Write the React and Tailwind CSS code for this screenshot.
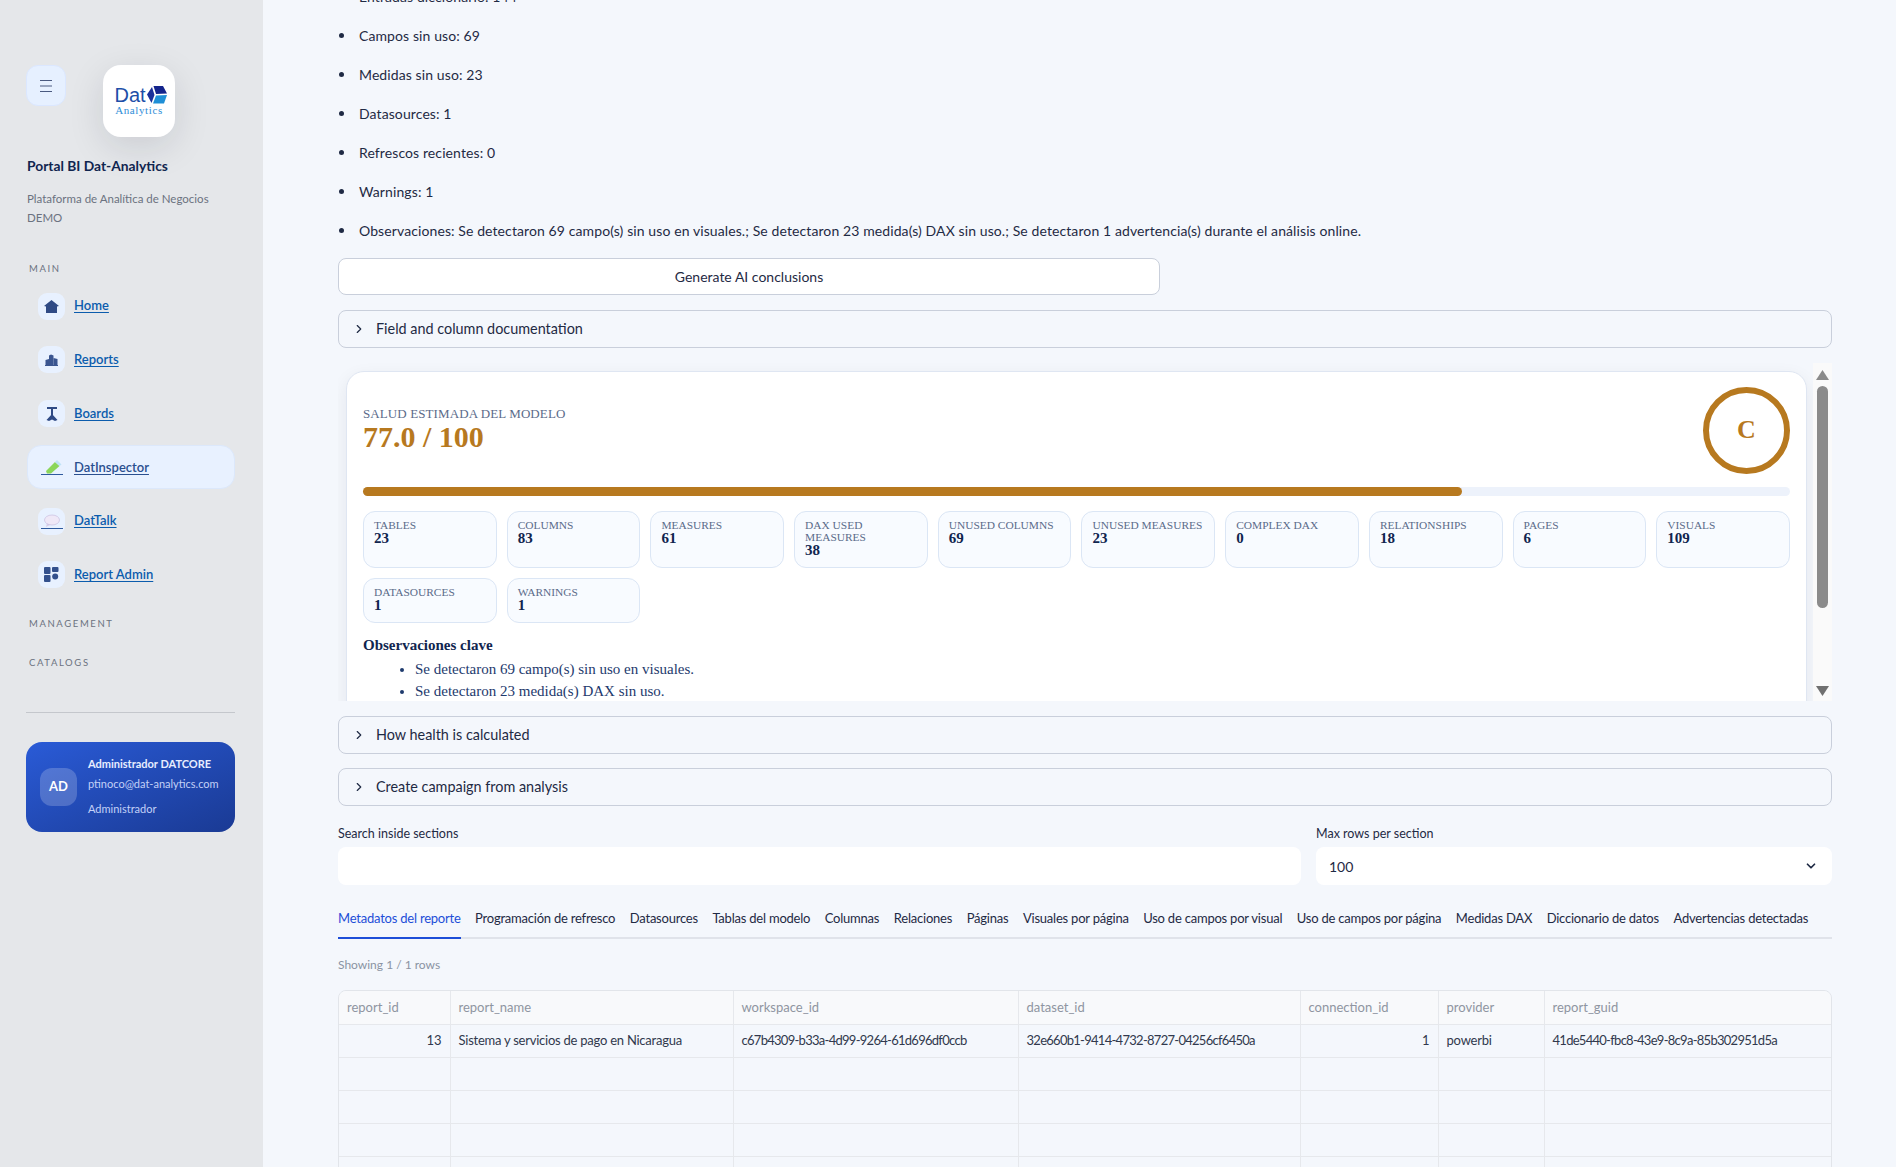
import React from 'react';
import { ChevronRight, ChevronDown } from 'lucide-react';

const summary = [
  'Entradas diccionario: 144',
  'Campos sin uso: 69',
  'Medidas sin uso: 23',
  'Datasources: 1',
  'Refrescos recientes: 0',
  'Warnings: 1',
  'Observaciones: Se detectaron 69 campo(s) sin uso en visuales.; Se detectaron 23 medida(s) DAX sin uso.; Se detectaron 1 advertencia(s) durante el análisis online.',
];

const kpis = [
  ['Tables', 23], ['Columns', 83], ['Measures', 61], ['DAX used measures', 38], ['Unused columns', 69],
  ['Unused measures', 23], ['Complex DAX', 0], ['Relationships', 18], ['Pages', 6], ['Visuals', 109],
  ['Datasources', 1], ['Warnings', 1],
];

const tabs = [
  'Metadatos del reporte', 'Programación de refresco', 'Datasources', 'Tablas del modelo', 'Columnas', 'Relaciones',
  'Páginas', 'Visuales por página', 'Uso de campos por visual', 'Uso de campos por página', 'Medidas DAX',
  'Diccionario de datos', 'Advertencias detectadas',
];

const columns = [
  ['report_id', 'w-[111px]', 'text-right'],
  ['report_name', 'w-[283px]', 'tracking-[-0.24px]'],
  ['workspace_id', 'w-[285px]', 'tracking-[-0.72px]'],
  ['dataset_id', 'w-[282px]', 'tracking-[-0.72px]'],
  ['connection_id', 'w-[138px]', 'text-right'],
  ['provider', 'w-[106px]', 'tracking-[-0.2px]'],
  ['report_guid', 'w-[288px]', 'tracking-[-0.72px]'],
];

const row = ['13', 'Sistema y servicios de pago en Nicaragua', 'c67b4309-b33a-4d99-9264-61d696df0ccb', '32e660b1-9414-4732-8727-04256cf6450a', '1', 'powerbi', '41de5440-fbc8-43e9-8c9a-85b302951d5a'];

const HomeIcon = () => (
  <svg viewBox="0 0 15 13" className="w-[15px] h-[13px]"><polygon points="7.5,0 15,6 13,6.5 13,13 2,13 2,6.5 0,6" fill="#2f4a85" /></svg>
);
const ReportsIcon = () => (
  <svg viewBox="0 0 13 12" className="w-[13px] h-[12px]" fill="#3a5590">
    <polygon points="0.5,11 0.5,6 4,5 4,11" /><polygon points="4,11 4,1.5 6,0.5 8.5,1.5 8.5,11" /><polygon points="8.5,11 8.5,4 12.5,5 12.5,11" /><rect x="0" y="11" width="13" height="1" />
  </svg>
);
const BoardsIcon = () => (
  <svg viewBox="0 0 12 14" className="w-[12px] h-[14px]" fill="#2f4a85">
    <rect x="1" y="0" width="10" height="2" /><rect x="5" y="2" width="2" height="7" /><polygon points="6,7 11.5,13 9,14 6,12.5 3,14 0.5,13" />
  </svg>
);
const InspectorIcon = () => (
  <svg viewBox="0 0 22 15" className="w-[22px] h-[15px]">
    <polygon points="5,11 14,2 18.5,6 10,13.5 6,13.5" fill="#8bd65a" />
    <polygon points="14,2 16,0 20.5,4.5 18.5,6" fill="#bfe3f7" />
    <rect x="0" y="14" width="22" height="1" fill="#2f5a9e" />
  </svg>
);
const TalkIcon = () => (
  <svg viewBox="0 0 22 15" className="w-[22px] h-[15px]">
    <polygon points="6,9 5,13 10,10.5" fill="#d9cde9" />
    <ellipse cx="11" cy="6" rx="7.5" ry="5" fill="#efe8f7" stroke="#c9bfe0" strokeWidth="0.7" />
    <rect x="0" y="14" width="22" height="1" fill="#2f5a9e" />
  </svg>
);
const AdminIcon = () => (
  <svg viewBox="0 0 15 15" className="w-[15px] h-[15px]" fill="#33508c">
    <rect x="0" y="0" width="6.5" height="7" rx="1" /><rect x="8" y="0" width="6.5" height="5" rx="1" /><rect x="0" y="8" width="6.5" height="7" rx="1" /><circle cx="11.2" cy="9.5" r="3" />
  </svg>
);

const nav = [
  ['Home', HomeIcon], ['Reports', ReportsIcon], ['Boards', BoardsIcon], ['DatInspector', InspectorIcon, true], ['DatTalk', TalkIcon], ['Report Admin', AdminIcon],
];

const Expander = ({ title, className }) => (
  <div className={`h-[38px] pb-px border border-[#c9cfdb] rounded-lg flex items-center pl-[13px] gap-[10px] text-[14.4px] text-[#1f2a44] ${className}`}>
    <ChevronRight className="w-[14px] h-[14px] shrink-0" strokeWidth={2} />
    <span>{title}</span>
  </div>
);

const Sidebar = () => (
  <aside className="w-[263px] shrink-0 bg-[#e5e7ea] pl-[26px] pr-[28px] pt-[65px]">
    <div className="flex items-start">
      <button className="w-[40px] h-[41px] rounded-xl bg-[#e6f0ff] border border-[#dbe7ff] flex items-center justify-center">
        <svg viewBox="0 0 12 12" className="w-[12px] h-[12px]" stroke="#4a5a80" strokeWidth="1"><path d="M0 .5h12M0 6h12M0 11.5h12" /></svg>
      </button>
      <div className="w-[72px] h-[72px] ml-[37px] rounded-[18px] bg-white shadow-[0_10px_36px_rgba(15,23,42,0.12)] flex flex-col items-center pt-[21px] pl-[3px]">
        <div className="flex items-center h-[18px]">
          <span className="font-['Liberation_Sans',sans-serif] text-[20px] leading-[18px] text-[#1e4fa8]">Dat</span>
          <svg viewBox="0 0 20 18" className="w-[20px] h-[18px] ml-px">
            <polygon points="0,8.5 5,1 7.5,9 4.5,17" fill="#1a2f9a" />
            <polygon points="6.5,0 16,0 20,7.5 9,8" fill="#14248c" />
            <polygon points="9,9.5 20,9 17,17.5 6,17.5" fill="#1f8fd6" />
          </svg>
        </div>
        <span className="font-['Liberation_Serif',serif] text-[11px] leading-[11px] mt-[1px] -ml-[3px] tracking-[0.6px] text-[#2f8ed8]">Analytics</span>
      </div>
    </div>
    <h1 className="mt-[20px] ml-px text-[13.8px] leading-[18px] font-bold text-[#10254f]">Portal BI Dat-Analytics</h1>
    <p className="mt-[14px] ml-px text-[11.5px] leading-[19px] text-[#6b7280]">Plataforma de Analítica de Negocios<br />DEMO</p>
    <p className="mt-[36px] ml-[3px] text-[9.5px] leading-[12px] tracking-[0.17em] text-[#6b7280]">MAIN</p>
    <nav className="mt-[9px] flex flex-col">
      {nav.map(([label, Icon, active]) => (
        <a
          key={label}
          href="#"
          className={`h-[44px] mb-[9.8px] flex items-center gap-[9px] ml-px rounded-[14px] ${active ? 'pl-[10px] bg-[#e8f1ff] border border-[#dce8fb] text-[#2a4f8f]' : 'pl-[11px] text-[#0b5cad]'}`}
        >
          <span className="w-[27px] h-[27px] shrink-0 rounded-[9px] bg-[#e8f1ff] flex items-center justify-center"><Icon /></span>
          <span className="text-[13px] font-semibold underline underline-offset-2">{label}</span>
        </a>
      ))}
    </nav>
    <p className="mt-[11px] ml-[3px] text-[9.5px] leading-[12px] tracking-[0.17em] text-[#6b7280]">MANAGEMENT</p>
    <p className="mt-[27px] ml-[3px] text-[9.5px] leading-[12px] tracking-[0.17em] text-[#6b7280]">CATALOGS</p>
    <hr className="mt-[43px] border-[#c4c7cc]" />
    <div className="mt-[29px] h-[90px] rounded-[16px] bg-linear-to-br from-[#2a5bd7] to-[#1a3a94] flex items-center pl-[14px] gap-[11px]">
      <div className="w-[37px] h-[38px] rounded-xl bg-white/20 flex items-center justify-center text-white text-[13px] font-bold">AD</div>
      <div className="flex flex-col">
        <span className="text-[11px] leading-[16px] font-bold text-[#e7edff]">Administrador DATCORE</span>
        <span className="text-[11px] leading-[16px] mt-[4px] text-[#c3d1f7]">ptinoco@dat-analytics.com</span>
        <span className="text-[11px] leading-[16px] mt-[9px] text-[#c3d1f7]">Administrador</span>
      </div>
    </div>
  </aside>
);

const HealthFrame = () => (
  <div className="mt-[15px] h-[338px] flex overflow-hidden font-['Liberation_Serif',serif]">
    <div className="flex-1 pl-[8px] pt-[8px] pr-[6px]">
      <div className="rounded-[18px] bg-white border border-[#dfe6f2] shadow-[0_6px_18px_rgba(15,23,42,0.07)] px-[16px] pt-[15px] pb-[15px]">
        <div className="flex items-center justify-between">
          <div className="-mt-[3px]">
            <p className="text-[13px] leading-[15px] tracking-[0.1px] text-[#5b6b8a]">SALUD ESTIMADA DEL MODELO</p>
            <p className="text-[30px] leading-[32px] font-bold text-[#b7791f]">77.0 / 100</p>
          </div>
          <div className="w-[87px] h-[87px] pb-[3px] rounded-full border-[6px] border-[#b7791f] flex items-center justify-center text-[26px] font-bold text-[#b7791f]">C</div>
        </div>
        <div className="mt-[13px] h-[9px] rounded-full bg-[#edf2fb]">
          <div className="h-full w-[77%] rounded-full bg-[#b7791f]" />
        </div>
        <div className="mt-[15px] grid grid-cols-10 gap-[10px]">
          {kpis.map(([label, value]) => (
            <div key={label} className="rounded-xl bg-[#f8fbff] border border-[#dbe6f5] px-[10px] pt-[7px] pb-[9px]">
              <p className="text-[11.4px] leading-[12px] uppercase text-[#5b6b8a]">{label}</p>
              <p className="text-[15px] leading-[15px] font-bold text-[#10254f]">{value}</p>
            </div>
          ))}
        </div>
        <h3 className="mt-[14px] text-[15px] leading-[17px] font-bold text-[#10254f]">Observaciones clave</h3>
        <ul className="mt-[4px] pl-[52px] list-disc text-[15px] leading-[22px] text-[#1e3a6d]">
          <li>Se detectaron 69 campo(s) sin uso en visuales.</li>
          <li>Se detectaron 23 medida(s) DAX sin uso.</li>
        </ul>
      </div>
    </div>
    <div className="w-[19px] bg-[#fafafa] flex flex-col items-center justify-between pt-[7px] pb-[5px] shrink-0">
      <svg viewBox="0 0 13 10" className="w-[13px] h-[10px]" fill="#8b8b8b"><polygon points="6.5,0 13,10 0,10" /></svg>
      <div className="w-[11px] h-[222px] rounded-full bg-[#8b8b8b] mb-[70px] -mt-[2px]" />
      <svg viewBox="0 0 13 10" className="w-[13px] h-[10px]" fill="#707070"><polygon points="0,0 13,0 6.5,10" /></svg>
    </div>
  </div>
);

const DataTable = () => (
  <div className="mt-[17px] border border-[#e2e5ea] rounded-lg overflow-hidden">
    <table className="w-full table-fixed border-collapse text-[13px]">
      <thead>
        <tr className="bg-[#f8f9fb] h-[33px]">
          {columns.map(([name, width], i) => (
            <th key={name} className={`${width} px-[8px] font-normal text-left text-[#8f95a1] ${i > 0 ? 'border-l border-[#e6e8ec]' : ''}`}>{name}</th>
          ))}
        </tr>
      </thead>
      <tbody>
        {[row, null, null, null, null].map((cells, r) => (
          <tr key={r} className="h-[33px] border-t border-[#e6e8ec]">
            {columns.map(([name, , cellClass], i) => (
              <td key={name} className={`px-[8px] text-[#31394d] whitespace-nowrap overflow-hidden ${cellClass} ${i > 0 ? 'border-l border-[#e6e8ec]' : ''}`}>
                {cells ? cells[i] : ''}
              </td>
            ))}
          </tr>
        ))}
      </tbody>
    </table>
  </div>
);

export default function App() {
  return (
    <div className="h-screen overflow-hidden flex bg-[#f4f7fc] font-[Lato,sans-serif] text-[14px] text-[#1f2a44]">
      <Sidebar />
      <main className="flex-1 min-w-0 pl-[75px] pr-[64px]">
        <ul className="-mt-[23px] mb-[8px] tracking-[0.1px]">
          {summary.map((item) => (
            <li key={item} className="h-[39px] flex items-center">
              <span className="w-[5px] h-[5px] ml-px mr-[15px] rounded-full bg-[#1f2a44] shrink-0" />
              {item}
            </li>
          ))}
        </ul>
        <button className="block w-[822px] h-[37px] rounded-lg bg-white border border-[#c9cfdb]">Generate AI conclusions</button>
        <Expander title="Field and column documentation" className="mt-[15px]" />
        <HealthFrame />
        <Expander title="How health is calculated" className="mt-[15px]" />
        <Expander title="Create campaign from analysis" className="mt-[14px]" />
        <div className="mt-[19px] grid grid-cols-[963px_1fr] gap-[15px]">
          <label className="block">
            <span className="block text-[12.5px] leading-[17px] mb-[5px]">Search inside sections</span>
            <div className="h-[38px] rounded-lg bg-white" />
          </label>
          <label className="block">
            <span className="block text-[12.5px] leading-[17px] mb-[5px]">Max rows per section</span>
            <div className="h-[38px] rounded-lg bg-white flex items-center justify-between pl-[13px] pr-[14px]">
              <span>100</span>
              <ChevronDown className="w-[14px] h-[14px]" strokeWidth={3} />
            </div>
          </label>
        </div>
        <div className="mt-[14px] h-[40px] flex gap-[14.5px] border-b-2 border-[#e0e3ea]">
          {tabs.map((tab, i) => (
            <span key={tab} className={`h-[40px] leading-[39px] text-[13px] tracking-[-0.22px] whitespace-nowrap ${i === 0 ? 'text-[#1d4ed8] border-b-2 border-[#1d4ed8]' : ''}`}>{tab}</span>
          ))}
        </div>
        <p className="mt-[17px] text-[12px] leading-[17px] text-[#8a93a3]">Showing 1 / 1 rows</p>
        <DataTable />
      </main>
    </div>
  );
}
